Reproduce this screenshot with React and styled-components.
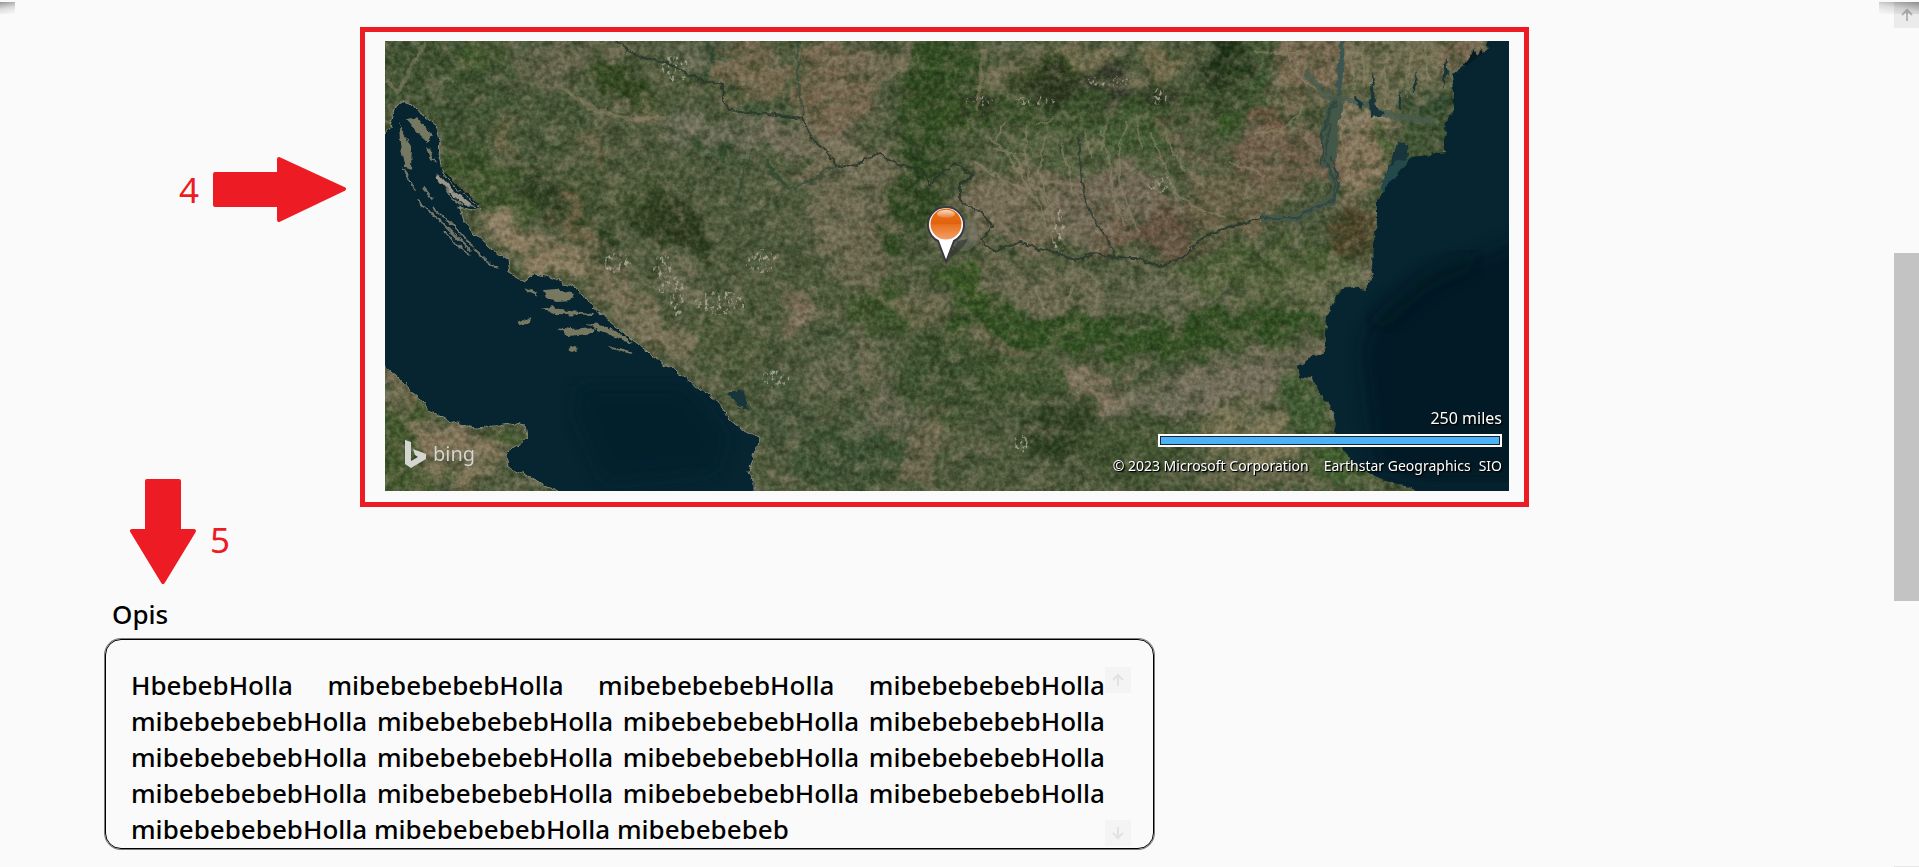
import React from "react";
import styled, { createGlobalStyle } from "styled-components";

const RED = "#ed1c24";
const PAPER = "#fafafa";
const FONT = '"Segoe UI", "Noto Sans", "Open Sans", sans-serif';

const GlobalStyle = createGlobalStyle`
  *, *::before, *::after { box-sizing: border-box; }
  body { margin: 0; background: ${PAPER}; color: #000; font-family: ${FONT}; }
`;

const Page = styled.div`
  position: relative;
  display: flex;
  min-height: 100vh;
  background: ${PAPER};
`;

const Content = styled.main`
  flex: 1;
  min-width: 0;
`;

const CornerShadow = styled.span`
  position: absolute;
  top: 2px;
  left: ${(p) => (p.$side === "left" ? "0" : "auto")};
  right: ${(p) => (p.$side === "right" ? "0" : "auto")};
  width: ${(p) => (p.$side === "left" ? "15px" : "40px")};
  height: 12px;
  background: linear-gradient(
    ${(p) => (p.$side === "left" ? "170deg" : "190deg")},
    rgba(0, 0, 0, 0.4),
    rgba(0, 0, 0, 0.12) 50%,
    transparent
  );
  pointer-events: none;
`;

const MapSection = styled.section`
  display: flex;
  align-items: flex-start;
`;

const Notes = styled.div`
  flex: none;
  width: 360px;
  display: flex;
  flex-direction: column;
  gap: 257px;
  padding-top: 157px;
`;

const Note = styled.div`
  display: flex;
  align-items: center;
  justify-content: ${(p) => (p.$end ? "flex-end" : "flex-start")};
  gap: 14px;
  padding: ${(p) => (p.$end ? "0 14px 0 0" : "0 0 0 130px")};
  color: ${RED};
  font-size: 35px;
  line-height: 48px;

  svg { display: block; flex: none; }
  svg + span { padding-top: 16px; }
`;

const Arrow = styled.svg`
  fill: ${RED};
  stroke: ${RED};
  stroke-width: 4px;
  stroke-linejoin: round;
`;

const Frame = styled.div`
  flex: 1;
  max-width: 1169px;
  margin-top: 27px;
  padding: 9px 15px 11px 20px;
  border: 5px solid ${RED};
`;

const MapView = styled.figure`
  position: relative;
  margin: 0;
  overflow: hidden;
  background: #4d5a39;

  > svg { display: block; width: 100%; height: auto; }
`;

const Pin = styled.div`
  position: absolute;
  left: 50%;
  top: 36%;
  width: 50px;
  margin-left: -21px;

  svg { display: block; overflow: visible; }
`;

const Brand = styled.div`
  position: absolute;
  left: 20px;
  bottom: 21px;
  display: flex;
  align-items: center;
  gap: 7px;
  color: #d6d6d0;
  font-size: 20px;
  line-height: 32px;
  text-shadow: 0 0 1px #555;
`;

const MapLegend = styled.figcaption`
  position: absolute;
  right: 7px;
  bottom: 13px;
  display: flex;
  flex-direction: column;
  align-items: flex-end;
  color: #fff;
  font-size: 16px;
  line-height: 24px;
  text-shadow: 1px 1px 0 #000, 1px 1px 2px #000;
`;

const ScaleBar = styled.div`
  width: 344px;
  height: 13px;
  margin: 4px 0 7px;
  border: 2px solid #fff;
  background: #4cb2f7;
  box-shadow: inset 0 0 0 1px #16242e;
`;

const Credits = styled.div`
  display: flex;
  font-size: 14px;

  span:nth-child(2) { margin: 0 8px 0 15px; }
`;

const Description = styled.section`
  max-width: 1154px;
  padding: 12px 0 16px 105px;
`;

const Label = styled.label`
  display: block;
  padding-left: 7px;
  font-size: 26px;
  font-weight: 500;
  line-height: 36px;
`;

const TextPanel = styled.div`
  display: flex;
  margin-top: 7px;
  padding: 27px 22px 2px 25px;
  border: 1px solid #000;
  border-radius: 16px;
  box-shadow: 0 0 0 1px rgba(0, 0, 0, 0.5);
`;

const TextArea = styled.textarea`
  flex: 1;
  min-width: 0;
  height: 179px;
  margin: 0;
  padding: 0;
  border: 0;
  outline: 0;
  resize: none;
  overflow: hidden;
  background: transparent;
  color: #000;
  font-family: ${FONT};
  font-size: 26px;
  font-weight: 500;
  line-height: 36px;
  text-align: justify;
`;

const ScrollColumn = styled.div`
  flex: none;
  display: flex;
  flex-direction: column;
  justify-content: space-between;
`;

const ScrollButton = styled.button`
  display: flex;
  align-items: center;
  justify-content: center;
  width: ${(p) => (p.$faint ? "26px" : "25px")};
  height: 26px;
  padding: 0;
  border: 0;
  background: ${(p) => (p.$faint ? "#f4f4f4" : "#ebebeb")};
  color: ${(p) => (p.$faint ? "#e2e2e2" : "#b4b4b4")};
`;

const PageScroll = styled.div`
  flex: none;
  display: flex;
  flex-direction: column;
  width: 25px;
  padding-top: 2px;
  border-bottom: 1px solid #e8e8e8;
`;

const Thumb = styled.div`
  height: 348px;
  margin-top: 225px;
  background: #c3c3c3;
`;

const ArrowGlyph = ({ down }) => (
  <svg width="14" height="14" viewBox="0 0 14 14" fill="none" stroke="currentColor" strokeWidth="2" aria-hidden="true">
    <path d={down ? "M7 1V12M2 7L7 12L12 7" : "M7 13V2M2 7L7 2L12 7"} />
  </svg>
);

const ADRIATIC =
  "M0 92L5 86L9 72L12 62L16 60L28 63L37 74L51 84L55 97L54 116L58 132L70 146L89 162L97 169L87 169L74 166L78 179L89 192L104 206L123 219L125 232L139 240L150 233L166 236L192 247L208 266L231 286L254 304L280 324L301 337L319 351L334 362L345 379L355 387L375 397L372 409L368 417L364 431L368 439L368 460L185 460L173 450L150 439L123 426L121 412L135 402L142 396L140 384L131 382L108 386L89 387L70 382L43 369L39 361L26 351L20 342L-8 318L-8 92Z";
const BLACK_SEA =
  "M1106 -8L1101 9L1087 21L1067 34L1069 49L1069 69L1061 81L1059 99L1059 112L1027 116L1018 126L1004 142L992 159L992 182L988 202L987 229L989 232L980 249L970 246L956 248L948 264L942 276L940 292L940 312L929 314L913 326L915 336L927 337L935 352L944 364L951 379L950 392L958 409L972 426L992 436L1024 447L1055 460L1134 460L1134 -8Z";
const DANUBE =
  "M230 0L254 16L280 21L299 31L315 39L338 44L338 59L345 69L372 72L418 77L422 88L428 99L441 109L452 126L472 124L493 112L514 124L537 129L546 144L555 132L571 122L588 136L575 142L575 159L596 172L608 186L596 199L608 209L636 202L668 212L691 219L711 212L735 217L755 217L774 226L798 216L818 196L846 186L877 177L913 177";
const DELTA_ARM = "M877 177L913 177L925 169L948 159L950 139L940 119L944 79L954 52";

/* Regional ground colours: [cx, cy, rx, ry, rotation, colour, opacity] */
const REGIONS = [
  [60, 60, 70, 70, 20, "#3f5430", 0.8],
  [180, 20, 60, 18, -20, "#6e6950", 0.6],
  [90, 15, 30, 12, -20, "#3e5a28", 0.8],
  [240, 45, 44, 16, 28, "#314a1e", 0.95],
  [255, 68, 22, 8, 8, "#80745a", 0.85],
  [150, 85, 55, 30, 0, "#495a37", 0.8],
  [125, 95, 14, 18, 0, "#7b6b4c", 0.65],
  [215, 105, 12, 18, 0, "#7b6b4c", 0.6],
  [110, 150, 55, 20, 38, "#3d5727", 0.9],
  [185, 170, 65, 18, 42, "#283c1b", 0.8],
  [290, 185, 55, 24, 36, "#2a3b1a", 0.85],
  [225, 240, 50, 20, 35, "#7d7255", 0.8],
  [128, 200, 45, 20, 42, "#958467", 0.95],
  [160, 216, 40, 20, 15, "#8d7d5e", 0.9],
  [190, 180, 36, 8, 48, "#8a7153", 0.75],
  [265, 285, 55, 14, 40, "#82775a", 0.85],
  [300, 245, 30, 14, 50, "#777459", 0.7],
  [340, 300, 40, 30, 35, "#4f5c38", 0.8],
  [220, 150, 50, 25, 10, "#495833", 0.7],
  [330, 20, 50, 20, 10, "#656b54", 0.7],
  [365, 30, 38, 32, 0, "#77694d", 0.9],
  [450, 50, 38, 46, 12, "#7b694f", 0.9],
  [500, 20, 40, 18, -10, "#756c51", 0.8],
  [340, 95, 70, 18, 6, "#6f705b", 0.8],
  [420, 100, 60, 18, 6, "#78705a", 0.75],
  [470, 160, 52, 60, 10, "#726d52", 0.85],
  [480, 210, 30, 40, 10, "#70694f", 0.6],
  [325, 18, 7, 32, -4, "#284528", 0.9],
  [335, 110, 22, 8, 20, "#2e4a26", 0.9],
  [385, 77, 26, 5, 0, "#315032", 0.9],
  [545, 60, 24, 80, 12, "#2f4c1f", 0.95],
  [535, 150, 28, 60, 20, "#2e481f", 0.9],
  [565, 25, 34, 18, 0, "#304f20", 0.8],
  [625, 30, 35, 14, -30, "#7b7255", 0.8],
  [700, 20, 40, 14, 20, "#75704d", 0.85],
  [590, 70, 34, 24, -20, "#3a5423", 0.9],
  [665, 40, 40, 22, 0, "#35481f", 0.85],
  [720, 70, 130, 20, -4, "#3a5228", 0.95],
  [665, 45, 28, 16, 10, "#2b3420", 0.9],
  [595, 62, 20, 11, 0, "#2d3522", 0.85],
  [725, 42, 30, 13, 8, "#34382a", 0.95],
  [780, 55, 20, 16, 0, "#2c3721", 0.8],
  [840, 20, 21, 30, 0, "#1e3315", 1],
  [845, 60, 40, 24, -20, "#3a4e2a", 0.9],
  [775, 22, 24, 10, -20, "#80704d", 0.8],
  [875, 30, 9, 50, 0, "#38552a", 0.85],
  [925, 25, 36, 40, 10, "#7b6c50", 0.95],
  [1010, 20, 55, 42, 0, "#727050", 0.95],
  [1080, 10, 26, 18, -30, "#806c52", 0.85],
  [885, 78, 22, 16, -20, "#765d44", 0.95],
  [900, 115, 60, 30, 0, "#73614a", 0.95],
  [840, 165, 65, 30, -10, "#6f6549", 0.95],
  [640, 165, 65, 42, 0, "#776d54", 1],
  [730, 165, 60, 45, 0, "#736953", 1],
  [785, 190, 35, 24, 0, "#66533e", 0.9],
  [735, 195, 26, 16, 0, "#6c5a43", 0.8],
  [670, 110, 52, 22, 10, "#55643f", 0.85],
  [740, 95, 50, 16, 10, "#466034", 0.9],
  [800, 105, 34, 14, 25, "#70644b", 0.8],
  [850, 75, 12, 8, -20, "#365a22", 0.9],
  [980, 85, 36, 24, 10, "#8b7d62", 0.95],
  [975, 125, 24, 36, 0, "#8a785c", 0.95],
  [1000, 100, 14, 14, 0, "#435c2b", 0.8],
  [970, 190, 26, 28, 0, "#4f4628", 0.95],
  [1042, 92, 28, 30, 0, "#3e5530", 0.95],
  [1050, 62, 26, 12, 30, "#304a2f", 0.9],
  [980, 235, 30, 14, 0, "#777258", 0.85],
  [650, 245, 80, 24, 10, "#6b6a4e", 0.95],
  [780, 250, 80, 24, 0, "#65684b", 0.9],
  [880, 230, 90, 30, 0, "#4b6032", 0.8],
  [940, 255, 50, 22, 0, "#6d7050", 0.7],
  [690, 292, 145, 19, 5, "#30511f", 1],
  [860, 285, 75, 17, -8, "#2f501f", 0.95],
  [580, 245, 34, 16, 40, "#35561f", 0.95],
  [900, 315, 50, 12, -8, "#77705a", 0.8],
  [840, 345, 80, 24, -10, "#75705a", 0.95],
  [715, 350, 44, 18, 15, "#877860", 0.95],
  [770, 365, 36, 14, 10, "#6b6b56", 0.85],
  [615, 305, 38, 12, 25, "#71684c", 0.8],
  [560, 340, 60, 44, 0, "#3b522b", 0.85],
  [675, 390, 34, 26, 0, "#293d1c", 0.85],
  [640, 340, 44, 22, 10, "#3f562d", 0.8],
  [745, 410, 55, 32, 0, "#40542e", 0.85],
  [860, 395, 50, 24, 10, "#837a58", 0.9],
  [920, 365, 22, 30, -20, "#3f5d30", 0.95],
  [955, 425, 40, 18, 20, "#40602d", 0.95],
  [870, 435, 60, 12, 0, "#6e6b4c", 0.8],
  [485, 300, 55, 45, 0, "#505c3c", 0.8],
  [505, 270, 44, 22, 0, "#3b5526", 0.85],
  [408, 268, 14, 20, 0, "#84725a", 0.85],
  [535, 265, 24, 16, 30, "#736b50", 0.7],
  [445, 330, 22, 28, 0, "#696a50", 0.8],
  [482, 320, 8, 34, -20, "#82765c", 0.7],
  [395, 370, 26, 32, 0, "#46583a", 0.8],
  [465, 415, 50, 36, 0, "#3b5430", 0.85],
  [540, 405, 24, 40, 20, "#72694e", 0.8],
  [510, 370, 30, 24, 0, "#6b6a53", 0.7],
  [15, 400, 36, 36, 0, "#3f5728", 0.95],
  [75, 400, 48, 16, 10, "#88785c", 0.95],
  [70, 425, 40, 22, 10, "#847758", 0.9],
  [122, 393, 16, 8, -15, "#3c5b24", 0.95],
  [12, 350, 8, 28, -25, "#776d50", 0.8],
  [30, 440, 40, 12, 0, "#445a2a", 0.8],
];

/* Small drainage channels running down from the mountains */
const CHANNELS =
  "M601 95L625 115L640 142L655 165L664 190M620 80L610 100L632 128M642 85L640 112L646 145M660 95L654 130L664 160L670 185M676 98L684 130L688 155M715 88L725 120L728 155L740 185M742 82L735 105L734 140L745 170L754 190M765 90L775 115L790 150L812 168L840 175M780 95L800 130M590 120L610 135L640 150M900 0L905 25L925 45L948 56M918 70L895 90L870 92M845 122L870 130L880 135M955 90L958 115M1000 25L1001 65M870 10L915 12M690 245L680 260M650 250L660 270M650 84L668 78M608 108L630 112L636 130M700 90L706 118M722 84L716 110M752 84L756 108M966 10L968 50M978 6L980 44M1026 8L1022 56M1040 6L1044 40";

const ISLANDS =
  "M23 79L33 76L41 86L48 95L43 102L33 93ZM14 82L20 94L27 104L26 129L20 127L15 103ZM41 106L46 110L51 122L45 118ZM158 249L172 248L190 254L187 259L172 260L161 257ZM139 247L154 252L152 256L143 252ZM156 268L168 265L174 269L209 272L208 274L170 273ZM172 287L186 289L209 287L210 292L184 295ZM200 282L215 284L234 292L248 302L238 300L220 292ZM133 280L140 277L146 279L142 283L135 284ZM221 304L235 308L248 312L246 314L232 310ZM183 308L190 306L193 308L188 310Z";

const ISLAND_LINES =
  "M52 133L62 148L74 158L90 167M54 138L66 156L78 164M17 128L26 140L30 150M31 159L46 172L58 182L72 196L85 209M47 166L64 180L81 199L90 206M88 208L101 219L112 228M38 146L48 158M60 190L72 204L84 214";

function Satellite() {
  return (
    <svg viewBox="0 0 1124 450" preserveAspectRatio="xMidYMid slice" role="img" aria-label="Satellite map">
      <defs>
        <filter id="ground" x="-5%" y="-5%" width="110%" height="110%" colorInterpolationFilters="sRGB">
          <feGaussianBlur stdDeviation="4" result="soft" />
          <feTurbulence type="fractalNoise" baseFrequency="0.035" numOctaves="5" seed="4" result="n" />
          <feDisplacementMap in="soft" in2="n" scale="50" xChannelSelector="R" yChannelSelector="G" />
          <feColorMatrix type="saturate" values="0.92" />
        </filter>
        <filter id="coast" x="-2%" y="-2%" width="104%" height="104%" colorInterpolationFilters="sRGB">
          <feTurbulence type="fractalNoise" baseFrequency="0.12" numOctaves="3" seed="9" />
          <feDisplacementMap in="SourceGraphic" scale="7" xChannelSelector="R" yChannelSelector="G" />
        </filter>
        <filter id="tan" x="0" y="0" width="100%" height="100%" colorInterpolationFilters="sRGB">
          <feTurbulence type="fractalNoise" baseFrequency="0.05 0.06" numOctaves="6" seed="21" />
          <feColorMatrix values="0 0 0 0 0.55  0 0 0 0 0.51  0 0 0 0 0.41  4.6 0 0 0 -2.25" />
        </filter>
        <filter id="forest" x="0" y="0" width="100%" height="100%" colorInterpolationFilters="sRGB">
          <feTurbulence type="fractalNoise" baseFrequency="0.05 0.07" numOctaves="6" seed="37" />
          <feColorMatrix values="0 0 0 0 0.15  0 0 0 0 0.22  0 0 0 0 0.11  0 5 0 0 -2.5" />
        </filter>
        <filter id="grain" x="0" y="0" width="100%" height="100%" colorInterpolationFilters="sRGB">
          <feTurbulence type="fractalNoise" baseFrequency="0.2" numOctaves="4" seed="12" />
          <feColorMatrix values="1.9 0 0 0 -0.45  1.9 0 0 0 -0.45  1.9 0 0 0 -0.45  0 0 0 0 1" />
        </filter>
        <filter id="rock" x="-20%" y="-20%" width="140%" height="140%" colorInterpolationFilters="sRGB">
          <feTurbulence type="fractalNoise" baseFrequency="0.3 0.2" numOctaves="3" seed="8" result="n" />
          <feColorMatrix in="n" values="0 0 0 0 0.68  0 0 0 0 0.67  0 0 0 0 0.6  6 0 0 0 -3.3" />
          <feComposite in2="SourceAlpha" operator="in" />
        </filter>
        <filter id="deep"><feGaussianBlur stdDeviation="9" /></filter>
        <clipPath id="blackSea"><path d={BLACK_SEA} /></clipPath>
      </defs>
      <rect width="1124" height="450" fill="#505b3d" />
      <g filter="url(#ground)">
        {REGIONS.map(([cx, cy, rx, ry, turn, fill, opacity], i) => (
          <ellipse key={i} cx={cx} cy={cy} rx={rx} ry={ry} fill={fill} opacity={opacity} transform={`rotate(${turn} ${cx} ${cy})`} />
        ))}
      </g>
      <rect width="1124" height="450" filter="url(#tan)" opacity="0.38" />
      <rect width="1124" height="450" filter="url(#forest)" opacity="0.38" />
      <g filter="url(#rock)" opacity="0.8">
        <ellipse cx="278" cy="232" rx="10" ry="20" />
        <ellipse cx="292" cy="256" rx="7" ry="22" />
        <ellipse cx="335" cy="262" rx="26" ry="12" />
        <ellipse cx="232" cy="222" rx="14" ry="10" />
        <ellipse cx="376" cy="220" rx="16" ry="12" />
        <ellipse cx="390" cy="338" rx="14" ry="9" />
        <ellipse cx="724" cy="40" rx="22" ry="6" />
        <ellipse cx="650" cy="60" rx="20" ry="5" />
        <ellipse cx="594" cy="60" rx="14" ry="5" />
        <ellipse cx="774" cy="56" rx="8" ry="9" />
        <ellipse cx="674" cy="192" rx="7" ry="24" />
        <ellipse cx="775" cy="142" rx="12" ry="10" />
        <ellipse cx="636" cy="402" rx="7" ry="10" />
        <ellipse cx="290" cy="28" rx="14" ry="14" />
      </g>
      <rect width="1124" height="450" filter="url(#grain)" opacity="0.3" style={{ mixBlendMode: "soft-light" }} />
      <g fill="none" filter="url(#coast)" strokeLinejoin="round">
        <path d={CHANNELS} stroke="#8b8568" strokeWidth="2" opacity="0.6" />
        <path d="M169 42L204 66L238 77L280 77M600 8L595 40L592 70M0 40L14 50L40 0" stroke="#8c8266" strokeWidth="4" opacity="0.5" />
        <path d="M412 0L414 52L420 76M364 117L358 135L352 160M382 118L396 140L404 148L430 138L441 128L452 126" stroke="#344b3a" strokeWidth="2" opacity="0.8" />
        <path d="M382 118L388 132L402 146" stroke="#2d4a2c" strokeWidth="4" opacity="0.7" />
        <path d={DANUBE} stroke="#28362b" strokeWidth="2" opacity="0.9" />
        <path d="M693 96L697 142L703 169L723 199L731 216" stroke="#2d3a30" strokeWidth="2" opacity="0.85" />
        <path d={DELTA_ARM} stroke="#46584a" strokeWidth="7" />
        <path d="M944 122L945 84L952 60" stroke="#44584a" strokeWidth="15" />
        <path d="M936 122L938 90L950 56M950 160L954 140L946 116" stroke="#2c463f" strokeWidth="2" />
        <path d={DELTA_ARM} stroke="#2c4038" strokeWidth="2" opacity="0.7" />
        <path d="M954 52L958 -5" stroke="#3a5552" strokeWidth="5" />
        <path d="M920 30L940 54L975 62L1010 76L1050 80" stroke="#495d4d" strokeWidth="6" opacity="0.8" />
      </g>
      <g filter="url(#coast)">
        <path d="M988 30L990 64L1000 74L986 76L985 55ZM968 55L978 62L976 70ZM1060 16L1064 30L1058 48ZM1007 116L1013 100L1024 104L1022 120L1008 140L1000 138ZM1014 48L1016 70L1012 68ZM1032 30L1030 50L1026 46ZM342 352L359 349L365 370L353 364Z" fill="#17353a" />
        <path d="M1078 24L1086 15L1088 8L1092 15L1098 6L1096 20L1082 28Z" fill="#071c21" />
        <path d={ADRIATIC} fill="#062531" stroke="#8b8974" strokeWidth="1" />
        <path d={BLACK_SEA} fill="#062531" />
        <path d="M1027 116L1018 126L1004 142L998 152L996 142L1010 120Z" fill="#24494a" />
        <path d={ISLANDS} fill="#767861" />
        <path d={ISLAND_LINES} fill="none" stroke="#75766a" strokeWidth="2" />
        <path d="M54 136L66 150L84 164" fill="none" stroke="#9a968a" strokeWidth="4" />
        <path d="M60 132L72 146L94 164" fill="none" stroke="#0b2028" strokeWidth="2" />
      </g>
      <g clipPath="url(#blackSea)">
        <path d="M1140 196L1099 214L1051 232L1012 262L984 286L976 309L982 359L990 426L1040 440L1140 440Z" fill="#001522" opacity="0.7" filter="url(#deep)" />
        <path d="M1090 216L1040 240L1008 268L990 285" fill="none" stroke="#00121b" strokeWidth="12" opacity="0.6" filter="url(#deep)" />
      </g>
      <path d="M195 345L300 345L340 395L330 430L220 440L190 370Z" fill="#021d2a" opacity="0.6" filter="url(#deep)" />
    </svg>
  );
}

function PinIcon() {
  return (
    <svg width="50" height="62" viewBox="0 0 50 62" aria-hidden="true">
      <defs>
        <linearGradient id="orange" x1="0" y1="0" x2="0" y2="1">
          <stop offset="0" stopColor="#e9731b" />
          <stop offset="0.5" stopColor="#e2620c" />
          <stop offset="0.52" stopColor="#e8701d" />
          <stop offset="1" stopColor="#f3a067" />
        </linearGradient>
        <linearGradient id="gloss" x1="0" y1="0" x2="0" y2="1">
          <stop offset="0" stopColor="#fff" stopOpacity="0.75" />
          <stop offset="1" stopColor="#fff" stopOpacity="0.1" />
        </linearGradient>
      </defs>
      <ellipse cx="38" cy="32" rx="14" ry="16" fill="#777a70" opacity="0.45" />
      <path d="M20 60L32 38L42 36C38 46 28 50 20 60Z" fill="#333" opacity="0.6" />
      <path d="M20 59L12 38A18 18 0 1 1 28 38Z" fill="#fff" stroke="#3a3840" strokeWidth="2" />
      <circle cx="20" cy="21" r="15.5" fill="url(#orange)" />
      <ellipse cx="20" cy="11" rx="9" ry="4" fill="url(#gloss)" />
    </svg>
  );
}

const DESCRIPTION = "HbebebHolla " + "mibebebebebHolla ".repeat(17) + "mibebebebeb";

export default function App() {
  return (
    <>
      <GlobalStyle />
      <Page>
        <Content>
          <MapSection>
            <Notes>
              <Note $end>
                <span>4</span>
                <Arrow width="133" height="65" viewBox="0 0 133 65">
                  <path d="M2 17H66V2L131 32L66 63V48H2Z" />
                </Arrow>
              </Note>
              <Note>
                <Arrow width="66" height="105" viewBox="0 0 66 105">
                  <path d="M17 2H49V52H64L33 103L2 52H17Z" />
                </Arrow>
                <span>5</span>
              </Note>
            </Notes>
            <Frame>
              <MapView>
                <Satellite />
                <Pin><PinIcon /></Pin>
                <Brand>
                  <svg width="21" height="28" viewBox="0 0 21 28" fill="currentColor" aria-hidden="true">
                    <path d="M0 0L6 2V21L13 17L10 15L8 9L21 14V19L6 28L0 24Z" />
                  </svg>
                  <span>bing</span>
                </Brand>
                <MapLegend>
                  <span>250 miles</span>
                  <ScaleBar />
                  <Credits>
                    <span>© 2023 Microsoft Corporation</span>
                    <span>Earthstar Geographics</span>
                    <span>SIO</span>
                  </Credits>
                </MapLegend>
              </MapView>
            </Frame>
          </MapSection>
          <Description>
            <Label htmlFor="opis">Opis</Label>
            <TextPanel>
              <TextArea id="opis" readOnly value={DESCRIPTION} />
              <ScrollColumn>
                <ScrollButton type="button" $faint aria-label="Scroll text up"><ArrowGlyph /></ScrollButton>
                <ScrollButton type="button" $faint aria-label="Scroll text down"><ArrowGlyph down /></ScrollButton>
              </ScrollColumn>
            </TextPanel>
          </Description>
        </Content>
        <PageScroll>
          <ScrollButton type="button" aria-label="Scroll page up"><ArrowGlyph /></ScrollButton>
          <Thumb />
        </PageScroll>
        <CornerShadow $side="left" />
        <CornerShadow $side="right" />
      </Page>
    </>
  );
}
